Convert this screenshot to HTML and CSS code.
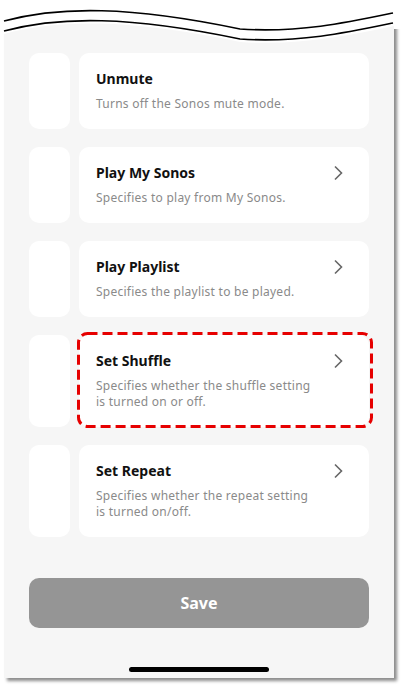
FILE: index.html
```html
<!DOCTYPE html>
<html lang="en">
<head>
    <meta charset="UTF-8">
    <meta name="viewport" content="width=device-width, initial-scale=1.0">
    <title>Sonos Actions</title>
    <link rel="stylesheet" href="styles.css">
</head>
<body>
    <div class="page">
        <div class="screen">
            <svg class="torn-edge" width="407" height="50" viewBox="0 0 407 50">
                <path d="M0 0 H407 V29 H394 V26 C350 35, 300 46, 240 42 C130 19, 60 19, 4 34 L0 34 Z" fill="#ffffff"/>
                <path d="M4 21 C60 6, 130 6, 240 29 C300 33, 350 22, 393 13" fill="none" stroke="#000" stroke-width="1.6"/>
                <path d="M4 31 C60 16, 130 16, 240 39 C300 43, 350 32, 393 23" fill="none" stroke="#000" stroke-width="1.6"/>
            </svg>

            <div class="action-list">
                <div class="action-row">
                    <div class="action-side"></div>
                    <div class="action-card">
                        <div class="action-head">
                            <span class="action-title">Unmute</span>
                        </div>
                        <p class="action-desc">Turns off the Sonos mute mode.</p>
                    </div>
                </div>

                <div class="action-row">
                    <div class="action-side"></div>
                    <div class="action-card">
                        <div class="action-head">
                            <span class="action-title">Play My Sonos</span>
                            <svg class="chevron" width="10" height="16" viewBox="0 0 10 16"><path d="M2 1.5 L8.5 8 L2 14.5" fill="none" stroke="#666" stroke-width="1.6"/></svg>
                        </div>
                        <p class="action-desc">Specifies to play from My Sonos.</p>
                    </div>
                </div>

                <div class="action-row">
                    <div class="action-side"></div>
                    <div class="action-card">
                        <div class="action-head">
                            <span class="action-title">Play Playlist</span>
                            <svg class="chevron" width="10" height="16" viewBox="0 0 10 16"><path d="M2 1.5 L8.5 8 L2 14.5" fill="none" stroke="#666" stroke-width="1.6"/></svg>
                        </div>
                        <p class="action-desc">Specifies the playlist to be played.</p>
                    </div>
                </div>

                <div class="action-row">
                    <div class="action-side"></div>
                    <div class="action-card">
                        <div class="action-head">
                            <span class="action-title">Set Shuffle</span>
                            <svg class="chevron" width="10" height="16" viewBox="0 0 10 16"><path d="M2 1.5 L8.5 8 L2 14.5" fill="none" stroke="#666" stroke-width="1.6"/></svg>
                        </div>
                        <p class="action-desc">Specifies whether the shuffle setting<br>is turned on or off.</p>
                        <svg class="highlight"><rect class="highlight-rect" rx="9"/></svg>
                    </div>
                </div>

                <div class="action-row">
                    <div class="action-side"></div>
                    <div class="action-card">
                        <div class="action-head">
                            <span class="action-title">Set Repeat</span>
                            <svg class="chevron" width="10" height="16" viewBox="0 0 10 16"><path d="M2 1.5 L8.5 8 L2 14.5" fill="none" stroke="#666" stroke-width="1.6"/></svg>
                        </div>
                        <p class="action-desc">Specifies whether the repeat setting<br>is turned on/off.</p>
                    </div>
                </div>
            </div>

            <button class="save-btn">Save</button>
            <div class="home-bar"></div>
        </div>
    </div>
</body>
</html>
```

FILE: styles.css
```css
* {
    margin: 0;
    padding: 0;
    box-sizing: border-box;
}

body {
    font-family: "Noto Sans", "Noto Sans CJK JP", sans-serif;
    background: #ffffff;
    width: 407px;
    height: 693px;
    overflow: hidden;
}

.page {
    padding-left: 4px;
}

.screen {
    position: relative;
    width: 390px;
    height: 678px;
    background: #f6f6f6;
    box-shadow: 3px 3px 3px rgba(0, 0, 0, 0.45);
    padding: 53px 25px 0;
}

.torn-edge {
    position: absolute;
    top: 0;
    left: -4px;
}

.action-list {
    display: flex;
    flex-direction: column;
    gap: 18px;
}

.action-row {
    display: grid;
    grid-template-columns: 41px 1fr;
    gap: 9px;
}

.action-side {
    background: #ffffff;
    border-radius: 10px;
}

.action-card {
    position: relative;
    background: #ffffff;
    border-radius: 10px;
    padding: 16px 26px 17px 17px;
}

.action-head {
    display: flex;
    align-items: center;
    justify-content: space-between;
    height: 20px;
}

.action-title {
    font-size: 14px;
    font-weight: 700;
    line-height: 20px;
    color: #111111;
}

.chevron {
    display: block;
}

.action-desc {
    margin-top: 7px;
    font-size: 12px;
    line-height: 16px;
    letter-spacing: 0.25px;
    color: #8a8a8a;
}

/* red dashed annotation around the selected action */
.highlight {
    position: absolute;
    top: -3px;
    left: -2px;
    width: calc(100% + 6px);
    height: calc(100% + 4px);
    overflow: visible;
}

.highlight-rect {
    x: 1.5px;
    y: 1.5px;
    width: calc(100% - 3px);
    height: calc(100% - 3px);
    fill: none;
    stroke: #e60000;
    stroke-width: 3;
    stroke-dasharray: 10 5;
}

.save-btn {
    display: block;
    width: 100%;
    height: 50px;
    margin-top: 41px;
    border: none;
    border-radius: 10px;
    background: #959595;
    color: #ffffff;
    font-family: inherit;
    font-size: 16px;
    font-weight: 700;
}

.home-bar {
    width: 140px;
    height: 5px;
    margin: 39px auto 0;
    background: #000000;
    border-radius: 3px;
}
```
